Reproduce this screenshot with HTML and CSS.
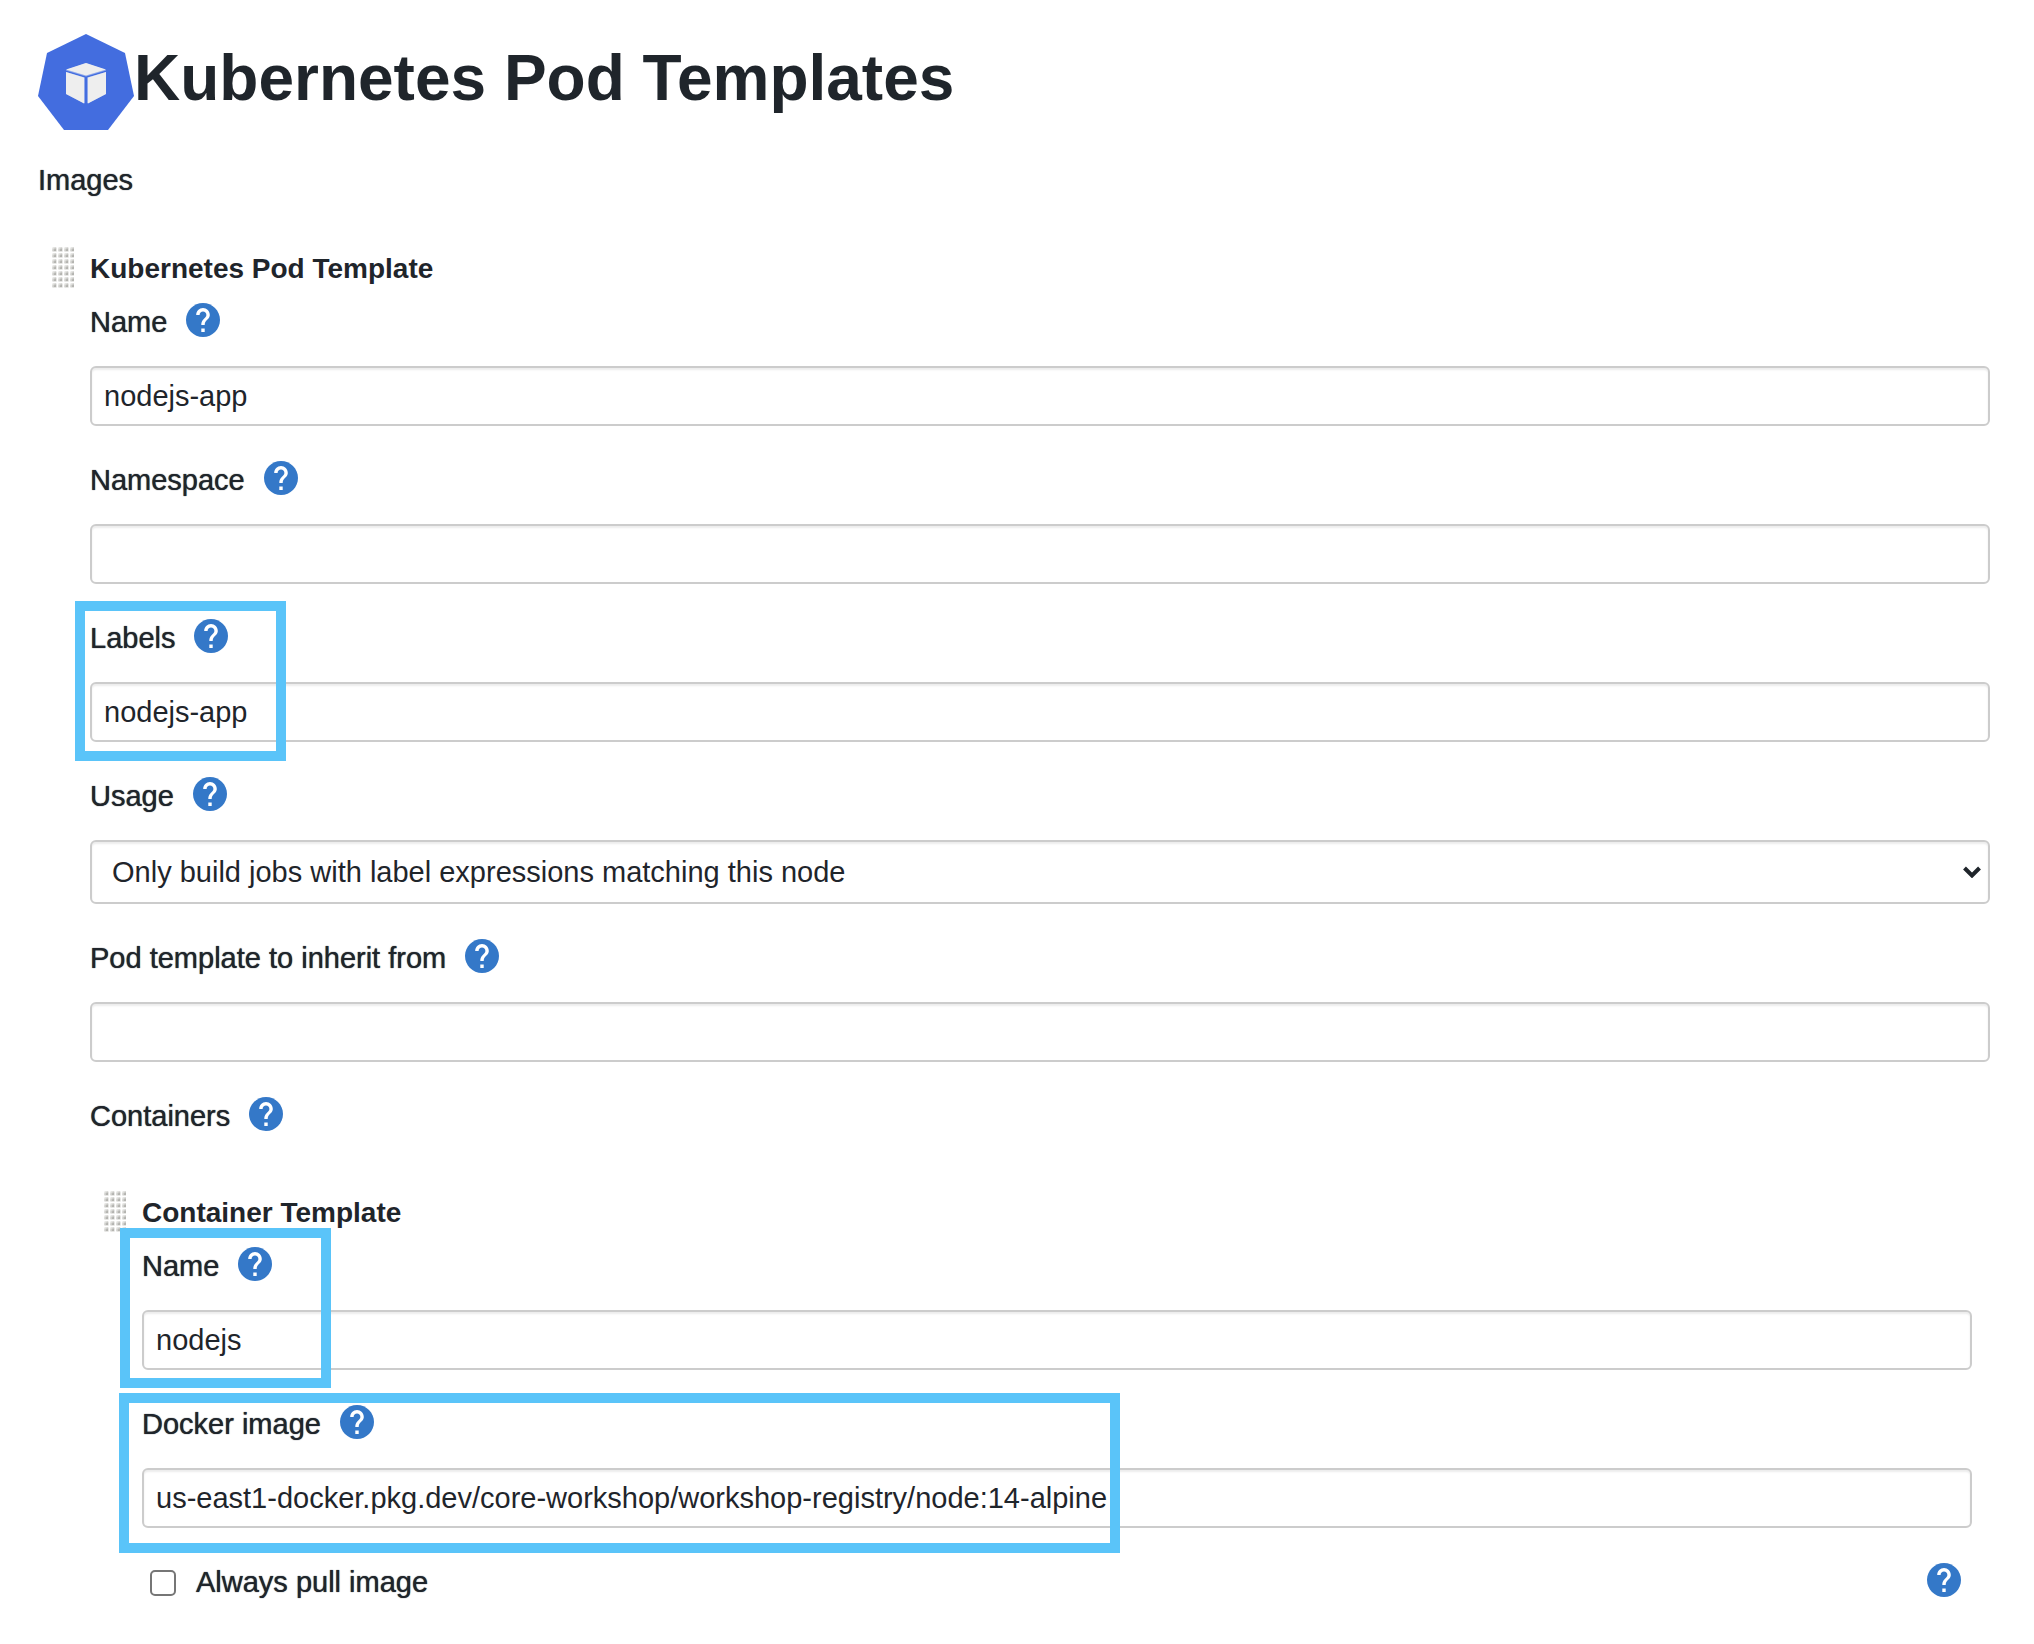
FILE: index.html
```html
<!DOCTYPE html>
<html lang="en">
<head>
<meta charset="utf-8">
<meta name="viewport" content="width=device-width, initial-scale=1">
<title>Kubernetes Pod Templates</title>
<link rel="stylesheet" href="styles.css">
</head>
<body>
<svg class="sprite" width="0" height="0" aria-hidden="true">
  <defs>
    <pattern id="grip-dot" width="6" height="6" patternUnits="userSpaceOnUse">
      <rect x="0" y="1" width="5" height="5" rx="1.500" fill="#e6e6e4"/>
      <path d="M0.500 5V3.500L3 1.500H4V5Z" fill="#cfcfcc"/>
      <path d="M2 5V3.500L4 2.500V5Z" fill="#b4b4b0"/>
    </pattern>
  </defs>
  <symbol id="help" viewBox="2 2 20 20">
    <path fill="#3478c8" d="M12 2C6.480 2 2 6.480 2 12s4.480 10 10 10 10-4.480 10-10S17.520 2 12 2z"/>
    <path fill="#fff" d="M13 19h-2v-2h2v2zm2.070-7.750l-.9.920C13.450 12.900 13 13.500 13 15h-2v-.5c0-1.100.45-2.100 1.170-2.830l1.240-1.260c.37-.36.59-.86.59-1.410 0-1.100-.9-2-2-2s-2 .9-2 2H8c0-2.210 1.790-4 4-4s4 1.790 4 4c0 .88-.36 1.680-.93 2.250z"/>
  </symbol>
  <symbol id="grip" viewBox="0 0 22 43"><rect width="22" height="43" fill="url(#grip-dot)"/></symbol>
</svg>
<main class="page">
  <header class="page-header">
    <svg class="logo" viewBox="0 0 96 96" aria-hidden="true">
      <path fill="#436ddf" d="M48 0L87 19L96 62L70 96H26L0 62L9 19Z"/>
      <path fill="#8fa8ea" d="M48 29L68 36V60L48 70L28 60V36Z"/>
      <path fill="#436ddf" d="M28 36.500L48 42.500L68 36.500V38L49 43.500V70H47V43.500L28 38Z"/>
      <path fill="#eee" d="M48 29L68 35.500L48 41.500L28 35.500ZM28 38L46 43.500V69.500L28 60ZM68 38L50 43.500V69.500L68 60Z"/>
    </svg>
    <h1 class="page-title">Kubernetes Pod Templates</h1>
  </header>
  <form class="form">
    <p class="label">Images</p>
    <section class="chunk">
      <svg class="grip" aria-hidden="true"><use href="#grip"/></svg>
      <div class="chunk-body">
        <h2 class="chunk-title">Kubernetes Pod Template</h2>
        <div class="field">
          <div class="label-row">
            <label class="label" for="pod-name">Name</label>
            <button class="help" type="button" aria-label="Help for Name"><svg class="help-icon"><use href="#help"/></svg></button>
          </div>
          <input class="input" id="pod-name" type="text" value="nodejs-app">
        </div>
        <div class="field">
          <div class="label-row">
            <label class="label" for="namespace">Namespace</label>
            <button class="help" type="button" aria-label="Help for Namespace"><svg class="help-icon"><use href="#help"/></svg></button>
          </div>
          <input class="input" id="namespace" type="text">
        </div>
        <div class="field">
          <div class="label-row">
            <label class="label" for="labels">Labels</label>
            <button class="help" type="button" aria-label="Help for Labels"><svg class="help-icon"><use href="#help"/></svg></button>
          </div>
          <input class="input" id="labels" type="text" value="nodejs-app">
          <span class="highlight highlight-labels"></span>
        </div>
        <div class="field">
          <div class="label-row">
            <label class="label" for="usage">Usage</label>
            <button class="help" type="button" aria-label="Help for Usage"><svg class="help-icon"><use href="#help"/></svg></button>
          </div>
          <div class="select-wrap">
            <select class="input select" id="usage">
              <option>Only build jobs with label expressions matching this node</option>
              <option>Use this node as much as possible</option>
            </select>
            <svg class="chevron" viewBox="0 0 18 12" aria-hidden="true"><path d="M1.500 2L9 9.500L16.500 2" fill="none" stroke="#1f252b" stroke-width="4"/></svg>
          </div>
        </div>
        <div class="field">
          <div class="label-row">
            <label class="label" for="inherit">Pod template to inherit from</label>
            <button class="help" type="button" aria-label="Help for Pod template to inherit from"><svg class="help-icon"><use href="#help"/></svg></button>
          </div>
          <input class="input" id="inherit" type="text">
        </div>
        <div class="label-row">
          <span class="label">Containers</span>
          <button class="help" type="button" aria-label="Help for Containers"><svg class="help-icon"><use href="#help"/></svg></button>
        </div>
        <section class="chunk chunk-nested">
          <svg class="grip" aria-hidden="true"><use href="#grip"/></svg>
          <div class="chunk-body">
            <h3 class="chunk-title">Container Template</h3>
            <div class="field">
              <div class="label-row">
                <label class="label" for="container-name">Name</label>
                <button class="help" type="button" aria-label="Help for Name"><svg class="help-icon"><use href="#help"/></svg></button>
              </div>
              <input class="input" id="container-name" type="text" value="nodejs">
              <span class="highlight highlight-name"></span>
            </div>
            <div class="field">
              <div class="label-row">
                <label class="label" for="image">Docker image</label>
                <button class="help" type="button" aria-label="Help for Docker image"><svg class="help-icon"><use href="#help"/></svg></button>
              </div>
              <input class="input" id="image" type="text" value="us-east1-docker.pkg.dev/core-workshop/workshop-registry/node:14-alpine">
              <span class="highlight highlight-image"></span>
            </div>
            <div class="check-row">
              <input class="checkbox" id="always-pull" type="checkbox">
              <label class="label" for="always-pull">Always pull image</label>
              <button class="help help-end" type="button" aria-label="Help for Always pull image"><svg class="help-icon"><use href="#help"/></svg></button>
            </div>
          </div>
        </section>
      </div>
    </section>
  </form>
</main>
</body>
</html>
```
FILE: styles.css
```css
* {
  box-sizing: border-box;
}

body {
  margin: 0;
  background: #fff;
  color: #1f252b;
  font: 29px/40px "Helvetica Neue", "Liberation Sans", Arial, sans-serif;
}

.sprite {
  position: absolute;
}

.page {
  padding: 34px 26px 42px 38px;
}

.page-header {
  display: flex;
  align-items: flex-start;
  margin-bottom: 30px;
}

.logo {
  flex: none;
  width: 96px;
  height: 96px;
}

.page-title {
  margin: 0;
  font-size: 64px;
  line-height: 88px;
  font-weight: 700;
}

.label {
  margin: 0;
  font-weight: 500;
  text-shadow: 0 0 1px currentColor;
}

/* Draggable repeatable block */
.chunk {
  display: flex;
  align-items: flex-start;
  gap: 16px;
  margin-top: 46px;
  padding: 0 18px 0 14px;
}

.chunk-nested {
  margin-top: 54px;
}

.grip {
  flex: none;
  width: 22px;
  height: 43px;
  cursor: move;
}

.chunk-body {
  flex: 1;
  min-width: 0;
}

.chunk-title {
  margin: 0 0 13px;
  padding-top: 3px;
  font-size: 28px;
  line-height: 40px;
  font-weight: 700;
}

.field {
  position: relative;
  margin-bottom: 34px;
}

.label-row {
  display: flex;
  align-items: flex-start;
  gap: 18px;
}

.field .label-row {
  margin-bottom: 24px;
}

.help {
  flex: none;
  padding: 1px;
  border: 0;
  background: none;
  cursor: pointer;
}

.help-icon {
  display: block;
  width: 34px;
  height: 34px;
}

.help-end {
  margin: 0 10px 0 auto;
}

.input {
  display: block;
  width: 100%;
  height: 60px;
  padding: 0 12px;
  border: 2px solid #ccc;
  border-radius: 6px;
  background: #fff;
  box-shadow: inset 0 2px 2px rgba(0, 0, 0, 0.08);
  color: inherit;
  font: inherit;
}

.select-wrap {
  position: relative;
}

.select {
  height: 64px;
  padding: 0 40px 0 20px;
  appearance: none;
}

.chevron {
  position: absolute;
  top: 26px;
  right: 9px;
  width: 18px;
  height: 12px;
  pointer-events: none;
}

.check-row {
  display: flex;
  align-items: flex-start;
  padding-left: 8px;
}

.checkbox {
  flex: none;
  width: 26px;
  height: 26px;
  margin: 8px 20px 0 0;
  border: 2px solid #767676;
  border-radius: 5px;
  background: #fff;
  appearance: none;
}

.checkbox:checked {
  background: #3478c8;
}

/* Callout frames laid over a field */
.highlight {
  position: absolute;
  height: 160px;
  border: 10px solid #5ac4f9;
  pointer-events: none;
}

.highlight-labels {
  top: -17px;
  left: -15px;
  width: 211px;
}

.highlight-name {
  top: -18px;
  left: -22px;
  width: 211px;
}

.highlight-image {
  top: -11px;
  left: -23px;
  width: 1001px;
}
```
